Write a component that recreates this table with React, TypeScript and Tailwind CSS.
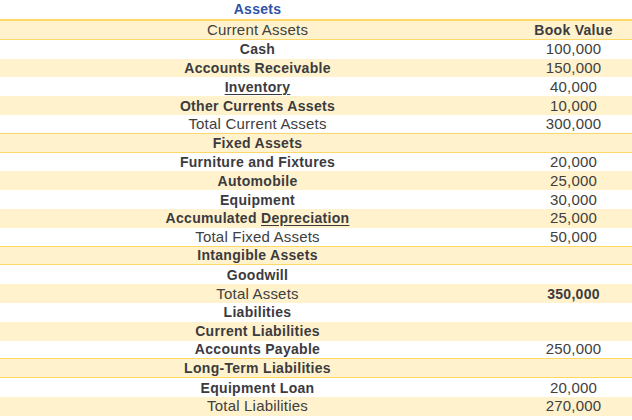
import type { ReactNode } from "react"

type Row = {
  label: ReactNode
  value?: string
  bold?: boolean
  valueBold?: boolean
  line?: boolean
}

const rows: Row[] = [
  { label: "Current Assets", value: "Book Value", valueBold: true, line: true },
  { label: "Cash", value: "100,000", bold: true },
  { label: "Accounts Receivable", value: "150,000", bold: true },
  { label: <span className="underline underline-offset-2">Inventory</span>, value: "40,000", bold: true },
  { label: "Other Currents Assets", value: "10,000", bold: true },
  { label: "Total Current Assets", value: "300,000", line: true },
  { label: "Fixed Assets", bold: true, line: true },
  { label: "Furniture and Fixtures", value: "20,000", bold: true },
  { label: "Automobile", value: "25,000", bold: true },
  { label: "Equipment", value: "30,000", bold: true },
  {
    label: (
      <>
        Accumulated <span className="underline underline-offset-2">Depreciation</span>
      </>
    ),
    value: "25,000",
    bold: true,
  },
  { label: "Total Fixed Assets", value: "50,000", line: true },
  { label: "Intangible Assets", bold: true, line: true },
  { label: "Goodwill", bold: true },
  { label: "Total Assets", value: "350,000", valueBold: true },
  { label: "Liabilities", bold: true },
  { label: "Current Liabilities", bold: true },
  { label: "Accounts Payable", value: "250,000", bold: true, line: true },
  { label: "Long-Term Liabilities", bold: true, line: true },
  { label: "Equipment Loan", value: "20,000", bold: true },
  { label: "Total Liabilities", value: "270,000" },
]

export default function App() {
  return (
    <div className="w-[632px] h-[420px] bg-white font-['Liberation_Sans',Arial,sans-serif] text-[#404040]">
      <div className="flex h-[21px] border-b-2 border-[#ffd966]">
        <div className="w-[515px] text-center text-[14px] font-bold leading-[19px] tracking-[0.3px] text-[#2f52a6]">
          Assets
        </div>
        <div className="flex-1" />
      </div>
      {rows.map((r, i) => (
        <div
          key={i}
          className={`flex h-[18.8px] items-center ${i % 2 === 0 ? "bg-[#fff2cc]" : "bg-white"} ${
            r.line ? "border-b border-[#ffd966]" : ""
          }`}
        >
          <div
            className={`w-[515px] text-center leading-[18px] ${
              r.bold
                ? "text-[14px] font-bold tracking-[0.3px] text-[#3b3b3f]"
                : "text-[15px] tracking-[0.2px]"
            }`}
          >
            {r.label}
          </div>
          <div
            className={`flex-1 text-center leading-[18px] ${
              r.valueBold
                ? "text-[14px] font-bold tracking-[0.3px] text-[#3b3b3f]"
                : "text-[15px] tracking-[0.2px]"
            }`}
          >
            {r.value}
          </div>
        </div>
      ))}
    </div>
  )
}
